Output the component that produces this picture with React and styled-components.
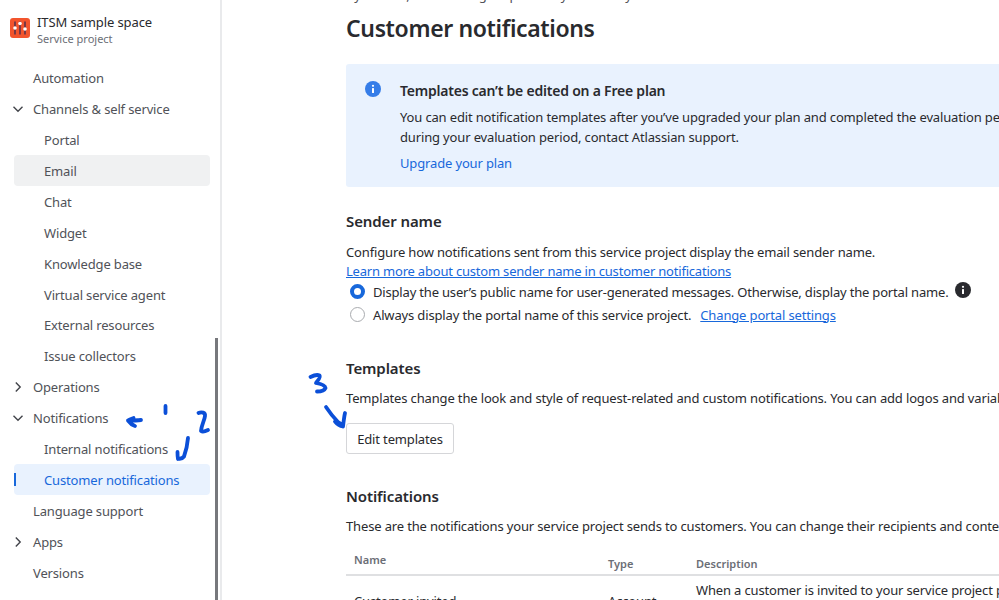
import React from "react";
import styled, { createGlobalStyle } from "styled-components";

const Global = createGlobalStyle`
  html, body {
    margin: 0;
    height: 600px;
    overflow: hidden;
    background: #fff;
  }
  * { box-sizing: border-box; }
`;

const Page = styled.div`
  position: relative;
  display: flex;
  width: 999px;
  height: 600px;
  overflow: hidden;
  font-family: "Noto Sans", "Open Sans", sans-serif;
  font-size: 13px;
  letter-spacing: -0.15px;
  color: #292a2e;
`;

const Sidebar = styled.aside`
  position: relative;
  flex: 0 0 222px;
  height: 600px;
  overflow: hidden;
  border-right: 2px solid #e9eaec;
  padding: 0 12px 0 14px;
`;

const Scroll = styled.div`
  position: absolute;
  right: 2px;
  top: 338px;
  bottom: 0;
  width: 3px;
  background: #77787c;
`;

const Project = styled.div`
  display: flex;
  gap: 7px;
  margin-left: -4px;
  padding-top: 13px;
  height: 62px;
`;

const ProjectText = styled.div`
  display: flex;
  flex-direction: column;
`;

const ProjectName = styled.div`
  font-size: 13px;
  line-height: 18px;
  letter-spacing: -0.1px;
`;

const ProjectSub = styled.div`
  font-size: 11px;
  line-height: 15px;
  letter-spacing: 0;
  color: #6b6e76;
`;

const Logo = styled.svg`
  margin-top: 5px;
  flex: none;
`;

const NavRow = styled.div`
  position: relative;
  display: flex;
  align-items: center;
  height: 30.94px;
  width: 196px;
  padding-top: 1px;
  padding-left: ${(p) => (p.$sub ? 30 : 19)}px;
  border-radius: 4px;
  white-space: nowrap;
  color: ${(p) => (p.$active ? "#1868db" : "#505258")};
  background: ${(p) => (p.$active ? "#e9f2fe" : p.$hover ? "#f0f1f2" : "transparent")};
`;

const Chevron = styled.svg`
  position: absolute;
  left: -3px;
  top: 9px;
`;

const ActiveBar = styled.span`
  position: absolute;
  left: 0;
  top: 9px;
  width: 2px;
  height: 13px;
  background: #1868db;
`;

const Main = styled.main`
  flex: 1;
  min-width: 0;
  padding-left: 124px;
`;

const Clipped = styled.div`
  height: 15px;
  margin-top: -11px;
  white-space: nowrap;
  line-height: 13px;
  color: #505258;
`;

const Title = styled.h1`
  margin: 10px 0 0;
  font-size: 23px;
  line-height: 28px;
  font-weight: 600;
  letter-spacing: -0.36px;
  color: #292a2e;
  white-space: nowrap;
`;

const Banner = styled.section`
  display: flex;
  gap: 19px;
  width: 760px;
  height: 123px;
  margin-top: 22px;
  padding: 17px 0 0 19px;
  background: #e9f2fe;
  border-radius: 3px;
`;

const BannerBody = styled.div`
  white-space: nowrap;
`;

const BannerTitle = styled.div`
  font-size: 14px;
  line-height: 20px;
  font-weight: 600;
  letter-spacing: -0.22px;
`;

const BannerText = styled.p`
  margin: 6px 0 0;
  line-height: 20px;
`;

const Link = styled.a`
  color: #1868db;
  text-decoration: ${(p) => (p.$under ? "underline" : "none")};
`;

const BannerLink = styled(Link)`
  display: block;
  margin-top: 6px;
  line-height: 20px;
`;

const LearnLink = styled(Link)`
  letter-spacing: -0.2px;
`;

const PortalLink = styled(Link)`
  margin-left: 9px;
`;

const Heading = styled.h2`
  margin: ${(p) => p.$top}px 0 0;
  font-size: 15px;
  line-height: 20px;
  font-weight: 600;
  letter-spacing: -0.1px;
  white-space: nowrap;
`;

const Para = styled.p`
  margin: ${(p) => p.$top || 0}px 0 0;
  line-height: 19px;
  white-space: nowrap;
`;

const RadioGroup = styled.div`
  margin-top: -1px;
`;

const RadioRow = styled.div`
  display: flex;
  align-items: center;
  height: 23px;
  white-space: nowrap;
  padding-left: 4px;
  letter-spacing: ${(p) => (p.$tight ? "-0.18px" : "inherit")};
`;

const Radio = styled.span`
  flex: none;
  width: 15px;
  height: 15px;
  margin-right: 8px;
  border-radius: 50%;
  background: #fff;
  border: ${(p) => (p.$on ? "4px solid #1868db" : "1px solid #a9abaf")};
`;

const InfoGlyph = styled.svg`
  flex: none;
  margin-left: ${(p) => p.$left || 0}px;
  margin-top: ${(p) => p.$top || 0}px;
`;

const Button = styled.button`
  display: block;
  width: 108px;
  height: 31px;
  margin-top: 15px;
  padding: 0;
  background: #fff;
  border: 1px solid #d5d6d9;
  border-radius: 3px;
  font: inherit;
  letter-spacing: inherit;
  color: #292a2e;
`;

const Table = styled.div`
  display: grid;
  grid-template-columns: 262px 88px 1fr;
  width: 760px;
  margin-top: 13px;
`;

const HeadCell = styled.div`
  height: 27px;
  border-bottom: 2px solid #dfe0e2;
  font-size: 11px;
  font-weight: 600;
  letter-spacing: 0;
  color: #6b6e76;
  padding-top: ${(p) => p.$top}px;
  padding-left: ${(p) => p.$left || 0}px;
  line-height: 16px;
  white-space: nowrap;
`;

const Cell = styled.div`
  padding-top: ${(p) => p.$top}px;
  padding-left: ${(p) => p.$left || 0}px;
  line-height: 20px;
  white-space: nowrap;
`;

const Scribble = styled.svg`
  position: absolute;
  left: 0;
  top: 0;
  pointer-events: none;
`;

const nav = [
  { label: "Automation" },
  { label: "Channels & self service", open: true },
  { label: "Portal", sub: true },
  { label: "Email", sub: true, hover: true },
  { label: "Chat", sub: true },
  { label: "Widget", sub: true },
  { label: "Knowledge base", sub: true },
  { label: "Virtual service agent", sub: true },
  { label: "External resources", sub: true },
  { label: "Issue collectors", sub: true },
  { label: "Operations", closed: true },
  { label: "Notifications", open: true },
  { label: "Internal notifications", sub: true },
  { label: "Customer notifications", sub: true, active: true },
  { label: "Language support" },
  { label: "Apps", closed: true },
  { label: "Versions" },
  { label: "Queues" },
];

const ChevronIcon = ({ open }) => (
  <Chevron width="14" height="14" viewBox="0 0 14 14" fill="none" stroke="#42444a" strokeWidth="1.4">
    <path d={open ? "M2.5 4.8 7 9.2l4.5-4.4" : "M4.8 2.5 9.2 7l-4.4 4.5"} />
  </Chevron>
);

const CircleInfo = ({ color, size = 16, left, top }) => (
  <InfoGlyph $left={left} $top={top} width={size} height={size} viewBox="0 0 16 16">
    <circle cx="8" cy="8" r="8" fill={color} />
    <rect x="7" y="7" width="2" height="5" rx="0.5" fill="#fff" />
    <circle cx="8" cy="4.8" r="1.1" fill="#fff" />
  </InfoGlyph>
);

const App = () => (
  <Page>
    <Global />
    <Sidebar>
      <Project>
        <Logo width="20" height="20" viewBox="0 0 20 20">
          <rect width="20" height="20" rx="3" fill="#f2542d" />
          <path d="M5 3.500v13M10 3.500v13M15 3.500v13" stroke="#3b2a52" strokeWidth="1.3" />
          <circle cx="5" cy="10" r="1.800" fill="#fff" />
          <circle cx="10" cy="5.500" r="1.800" fill="#fff" />
          <circle cx="15" cy="11" r="1.800" fill="#fff" />
        </Logo>
        <ProjectText>
          <ProjectName>ITSM sample space</ProjectName>
          <ProjectSub>Service project</ProjectSub>
        </ProjectText>
      </Project>
      {nav.map((item) => (
        <NavRow key={item.label} $sub={item.sub} $active={item.active} $hover={item.hover}>
          {item.active && <ActiveBar />}
          {(item.open || item.closed) && <ChevronIcon open={item.open} />}
          {item.label}
        </NavRow>
      ))}
      <Scroll />
    </Sidebar>

    <Main>
      <Clipped>By default, customers get updates by email only</Clipped>
      <Title>Customer notifications</Title>

      <Banner>
        <CircleInfo color="#357de8" />
        <BannerBody>
          <BannerTitle>Templates can’t be edited on a Free plan</BannerTitle>
          <BannerText>
            You can edit notification templates after you’ve upgraded your plan and completed the evaluation period. If you need help
            <br />
            during your evaluation period, contact Atlassian support.
          </BannerText>
          <BannerLink>Upgrade your plan</BannerLink>
        </BannerBody>
      </Banner>

      <Heading $top={24}>Sender name</Heading>
      <Para $top={12}>Configure how notifications sent from this service project display the email sender name.</Para>
      <Para>
        <LearnLink $under>Learn more about custom sender name in customer notifications</LearnLink>
      </Para>
      <RadioGroup>
        <RadioRow $tight>
          <Radio $on />
          Display the user’s public name for user-generated messages. Otherwise, display the portal name.
          <CircleInfo color="#292a2e" left={7} top={-3} />
        </RadioRow>
        <RadioRow>
          <Radio />
          Always display the portal name of this service project.
          <PortalLink $under>Change portal settings</PortalLink>
        </RadioRow>
      </RadioGroup>

      <Heading $top={32}>Templates</Heading>
      <Para $top={11}>Templates change the look and style of request-related and custom notifications. You can add logos and variables to your templates.</Para>
      <Button>Edit templates</Button>

      <Heading $top={32}>Notifications</Heading>
      <Para $top={11}>These are the notifications your service project sends to customers. You can change their recipients and content.</Para>
      <Table>
        <HeadCell $top={3} $left={8}>Name</HeadCell>
        <HeadCell $top={7}>Type</HeadCell>
        <HeadCell $top={7}>Description</HeadCell>
        <Cell $top={15} $left={8}>Customer invited</Cell>
        <Cell $top={15}>Account</Cell>
        <Cell $top={4}>When a customer is invited to your service project portal</Cell>
      </Table>
    </Main>

    <Scribble width="999" height="600" viewBox="0 0 999 600" fill="none" stroke="#0b4fd8" strokeWidth="3.800" strokeLinecap="round" strokeLinejoin="round">
      <path d="M141 420c-4 .5-9 .5-13 .5 1.500 2 4 4.500 7 5.500M128 420.500c2-1 3.500-2 5.500-2.500" />
      <path d="M165.500 406v7" />
      <path d="M198.500 413c3-1.500 7-.5 6.500 3-.5 4.500-3.500 9-4 15 1.500 1 4 .5 7-1" />
      <path d="M188 438c-.5 6-2 13-4 18.500-1.500 2-4 2.500-6 2M177.500 452c0 2.500 0 5 .5 7" />
      <path d="M310.500 377c3-1.500 7-2.500 9-1.500 1.500 2-2 5-3.500 7.500 3 .5 9 1.500 9.500 5-1 2.500-5 3.500-8.500 3.500" />
      <path d="M326 407c4 6 8 11 12 15 2.500 1 4 3 5 4.500.5-4 1-9 2-13.500M343 426.500c-3-.5-6-2.500-8-5" />
    </Scribble>
  </Page>
);

export default App;
